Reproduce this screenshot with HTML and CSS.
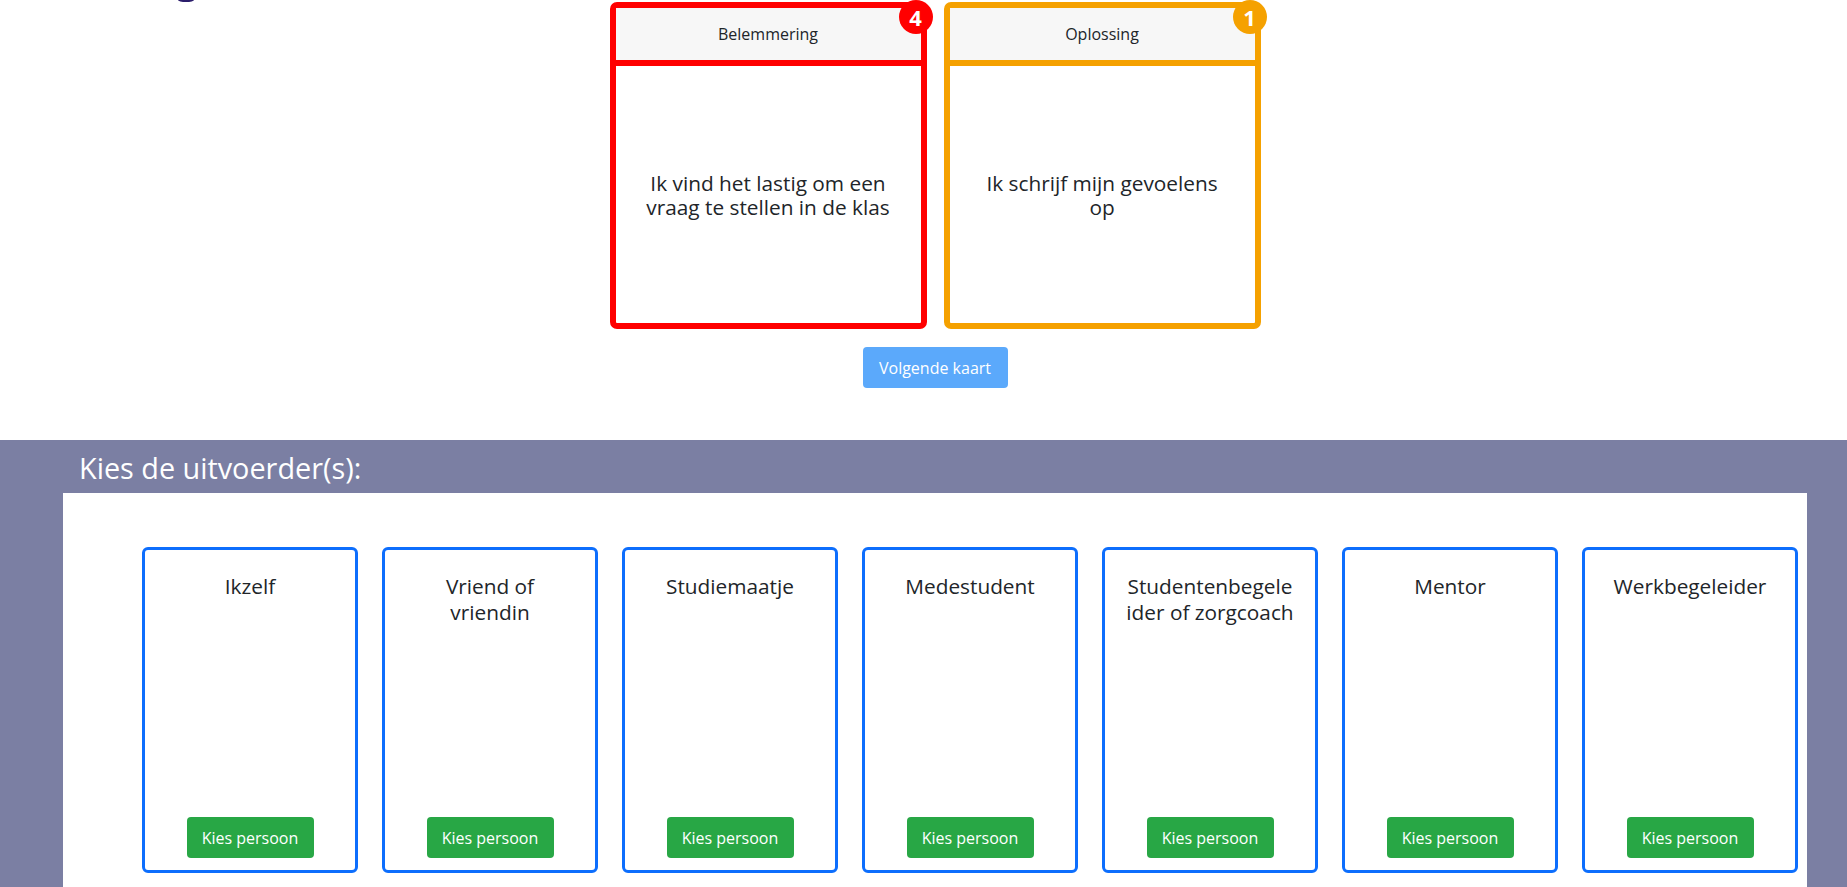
FILE: index.html
```html
<!DOCTYPE html>
<html lang="nl">
<head>
<meta charset="utf-8">
<title>Kaarten</title>
<link rel="stylesheet" href="styles.css">
</head>
<body>
<div class="logo-stub"></div>
<main class="top">
  <div class="card-pair">
    <div class="topcard red">
      <div class="topcard-head">Belemmering</div>
      <div class="topcard-body"><p>Ik vind het lastig om een vraag te stellen in de klas</p></div>
      <span class="badge">4</span>
    </div>
    <div class="topcard orange">
      <div class="topcard-head">Oplossing</div>
      <div class="topcard-body"><p>Ik schrijf mijn gevoelens op</p></div>
      <span class="badge">1</span>
    </div>
  </div>
  <div class="actions"><button class="btn-next">Volgende kaart</button></div>
</main>
<section class="performers">
  <h2>Kies de uitvoerder(s):</h2>
  <div class="panel">
    <div class="person-row">
      <div class="person"><h3>Ikzelf</h3><button class="btn-pick">Kies persoon</button></div>
      <div class="person"><h3>Vriend of<br>vriendin</h3><button class="btn-pick">Kies persoon</button></div>
      <div class="person"><h3>Studiemaatje</h3><button class="btn-pick">Kies persoon</button></div>
      <div class="person"><h3>Medestudent</h3><button class="btn-pick">Kies persoon</button></div>
      <div class="person"><h3>Studentenbegele<br>ider of zorgcoach</h3><button class="btn-pick">Kies persoon</button></div>
      <div class="person"><h3>Mentor</h3><button class="btn-pick">Kies persoon</button></div>
      <div class="person"><h3>Werkbegeleider</h3><button class="btn-pick">Kies persoon</button></div>
    </div>
  </div>
</section>
</body>
</html>
```
FILE: styles.css
```css
html, body {
  margin: 0;
  padding: 0;
}
body {
  font-family: "Open Sans", "Noto Sans", sans-serif;
  color: #212529;
  background: #fff;
  overflow: hidden;
}
.logo-stub {
  width: 16px;
  height: 2px;
  margin-left: 178px;
  background: #2b1d6b;
  border-radius: 0 0 8px 8px / 0 0 2px 2px;
}
.top {
  margin: 0 40px 0 63px;
}
.card-pair {
  display: flex;
  justify-content: center;
  gap: 17px;
}
.topcard {
  --accent: #ff0000;
  position: relative;
  width: 317px;
  height: 327px;
  box-sizing: border-box;
  border: 6px solid var(--accent);
  border-radius: 7px;
  display: flex;
  flex-direction: column;
}
.topcard.red { --accent: #ff0000; }
.topcard.orange { --accent: #f5a100; }
.topcard-head {
  height: 58px;
  box-sizing: border-box;
  background: #f7f7f7;
  border-bottom: 6px solid var(--accent);
  display: flex;
  align-items: center;
  justify-content: center;
  font-size: 16px;
}
.topcard-body {
  flex: 1;
  display: flex;
  align-items: center;
  justify-content: center;
  text-align: center;
}
.topcard-body p {
  margin: 0;
  max-width: 250px;
  font-size: 20.8px;
  line-height: 24px;
}
.badge {
  position: absolute;
  top: -8px;
  right: -12px;
  width: 34px;
  height: 34px;
  border-radius: 50%;
  background: var(--accent);
  color: #fff;
  font-weight: 700;
  font-size: 22px;
  display: flex;
  align-items: center;
  justify-content: center;
}
.actions {
  margin-top: 18px;
  display: flex;
  justify-content: center;
}
.btn-next {
  width: 145px;
  height: 41px;
  border: none;
  border-radius: 4px;
  background: #5ba9fb;
  color: #fff;
  font-family: inherit;
  font-size: 16px;
  padding: 0;
}
.performers {
  margin-top: 52px;
  background: #7b7fa3;
  padding: 0 40px 0 63px;
}
.performers h2 {
  margin: 0;
  padding: 10px 0 8px 16px;
  font-size: 28.8px;
  line-height: 35px;
  font-weight: 400;
  color: #fff;
}
.panel {
  background: #fff;
  padding: 54px 0 14px 79px;
}
.person-row {
  display: flex;
  gap: 24px;
}
.person {
  width: 216px;
  height: 326px;
  box-sizing: border-box;
  border: 3px solid #0d6efd;
  border-radius: 6px;
  padding: 23px 12px 12px;
  display: flex;
  flex-direction: column;
  align-items: center;
}
.person h3 {
  margin: 0;
  font-size: 20.8px;
  line-height: 26px;
  font-weight: 400;
  text-align: center;
  white-space: nowrap;
}
.btn-pick {
  margin-top: auto;
  width: 127px;
  height: 41px;
  border: none;
  border-radius: 4px;
  background: #28a745;
  color: #fff;
  font-family: inherit;
  font-size: 16px;
  padding: 0;
}
```
